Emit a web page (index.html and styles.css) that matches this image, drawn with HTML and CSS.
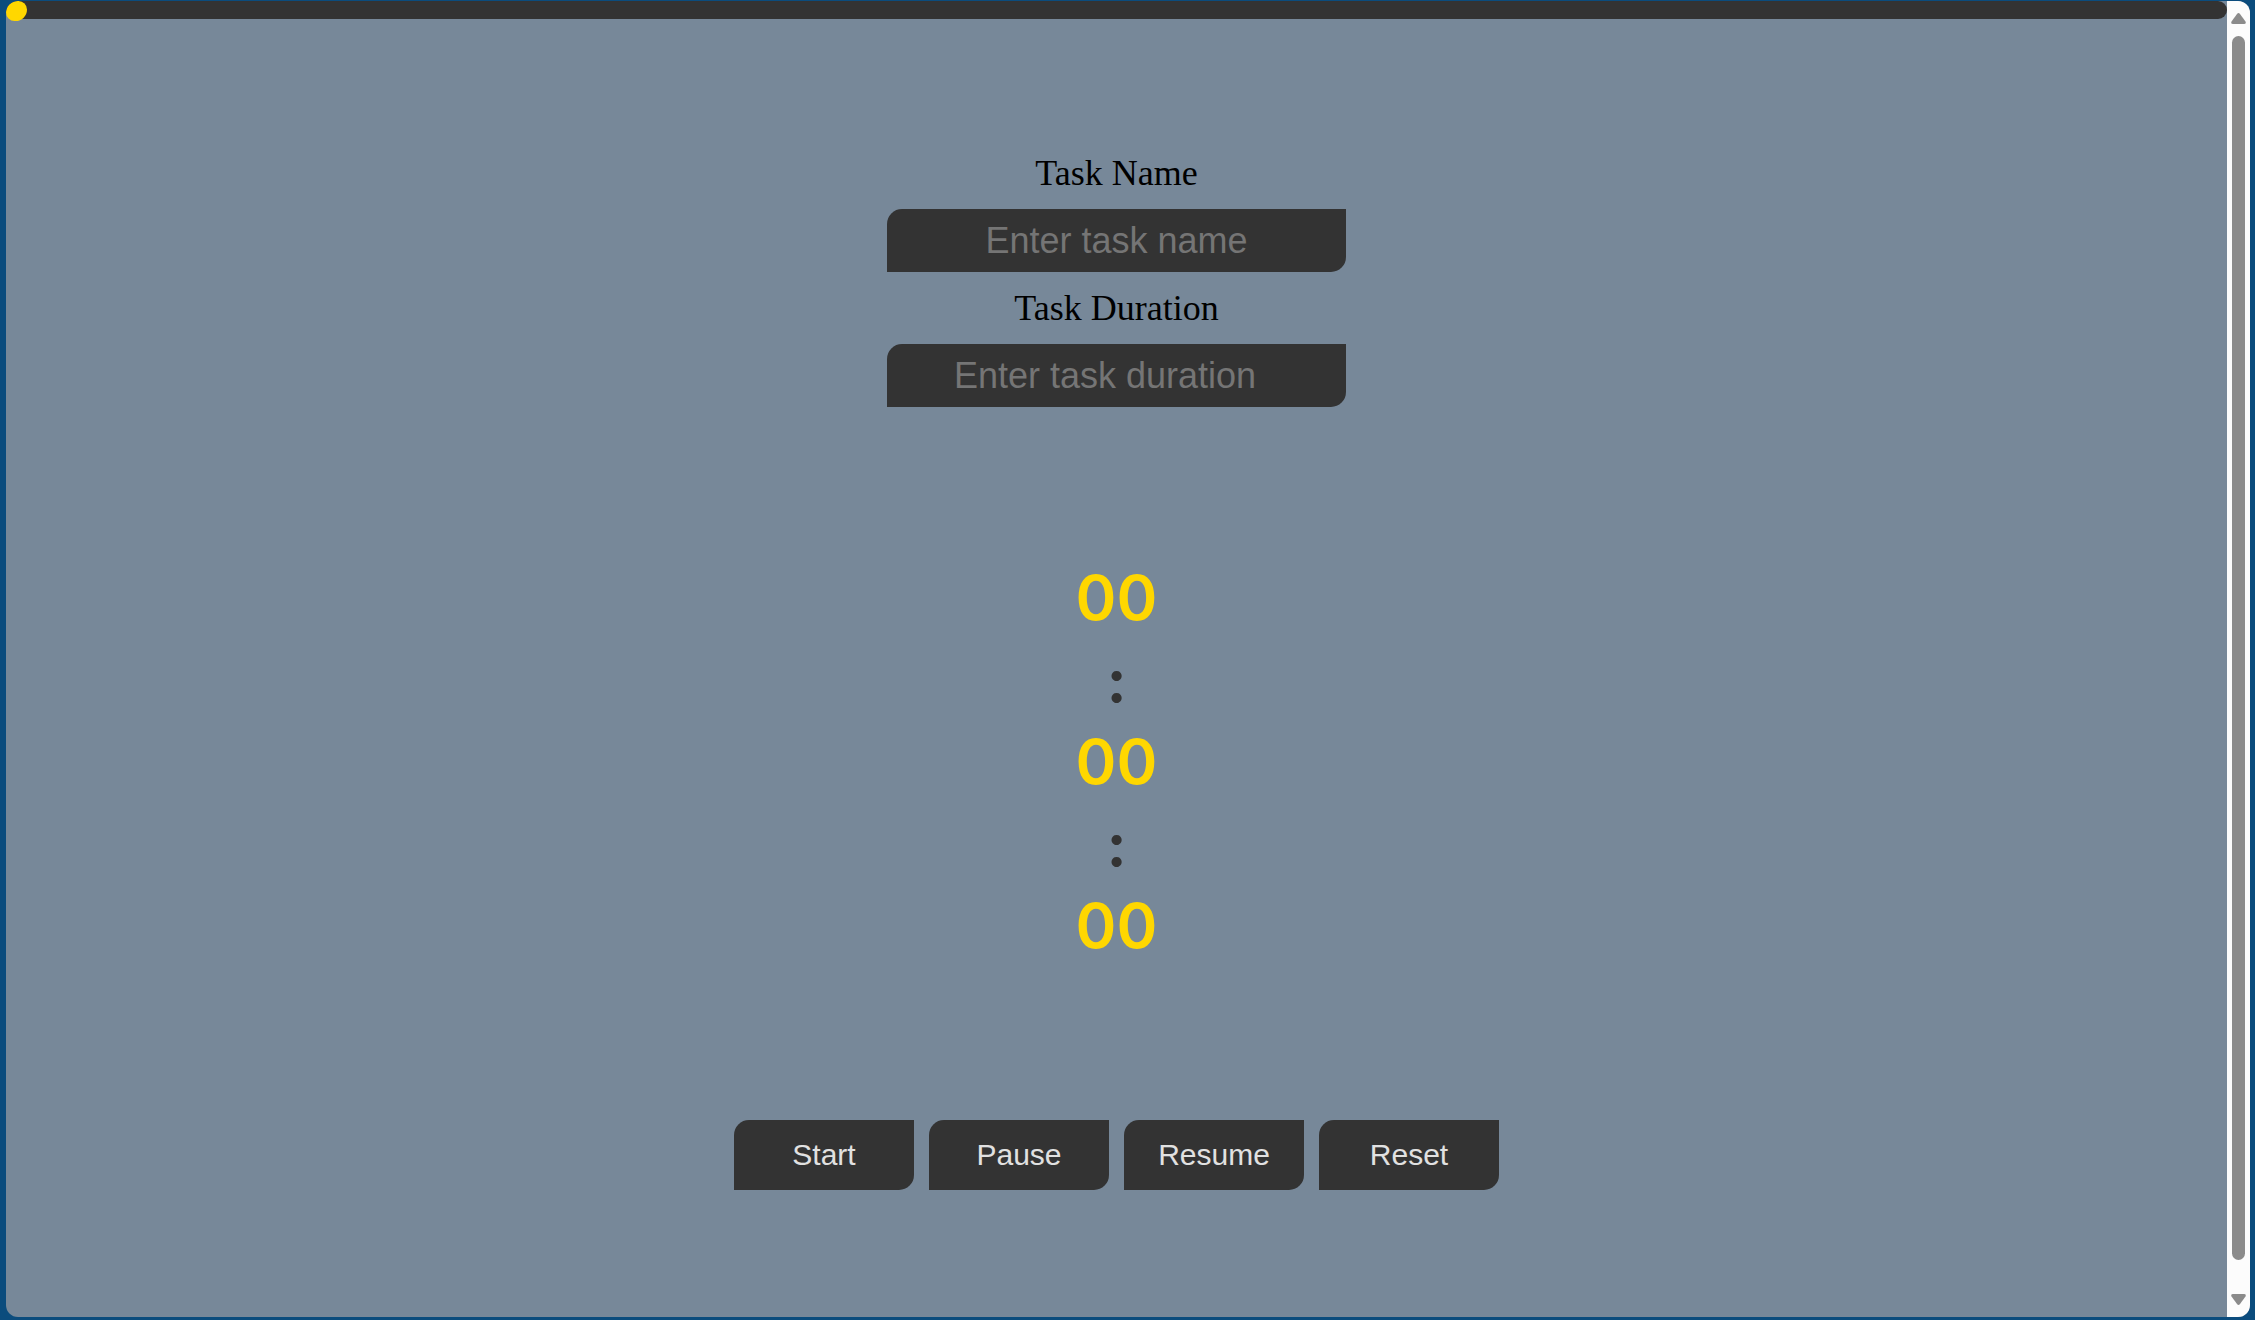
FILE: index.html
```html
<!DOCTYPE html>
<html lang="en">
<head>
<meta charset="utf-8">
<title>Task Timer</title>
<link rel="stylesheet" href="styles.css">
</head>
<body>
<div class="window">
  <main class="page">
    <div class="progress" role="progressbar" aria-label="Task progress" aria-valuenow="0" aria-valuemin="0" aria-valuemax="100">
      <div class="progress-ball"></div>
    </div>
    <div class="content">
      <form class="task-form">
        <label for="task-name">Task Name</label>
        <input id="task-name" type="text" placeholder="Enter task name">
        <label for="task-duration">Task Duration</label>
        <input id="task-duration" class="duration" type="number" placeholder="Enter task duration">
      </form>
      <div class="timer" role="timer">
        <span class="digits">00</span>
        <span class="colon">:</span>
        <span class="digits">00</span>
        <span class="colon">:</span>
        <span class="digits">00</span>
      </div>
      <div class="controls">
        <button type="button">Start</button>
        <button type="button">Pause</button>
        <button type="button">Resume</button>
        <button type="button">Reset</button>
      </div>
    </div>
  </main>
  <div class="scrollbar" aria-hidden="true">
    <svg class="arrow" viewBox="0 0 15 11"><path d="M6 1Q7.500-.8 9 1L14.500 8.500Q15.500 11 13 11H2Q-.5 11 .5 8.500Z"/></svg>
    <div class="thumb"></div>
    <svg class="arrow" viewBox="0 0 15 11"><path d="M6 10Q7.500 11.800 9 10L14.500 2.500Q15.500 0 13 0H2Q-.5 0 .5 2.500Z"/></svg>
  </div>
</div>
</body>
</html>
```
FILE: styles.css
```css
* { box-sizing: border-box; }
body {
  margin: 0;
  height: 100vh;
  padding: 1px 5px 3px 6px;
  background: #0b4c7d;
  font-family: "Liberation Serif", "Times New Roman", serif;
}
.window {
  display: flex;
  height: 100%;
  border-radius: 12px;
  overflow: hidden;
  background: #778899;
}
.page {
  flex: 1;
  display: flex;
  flex-direction: column;
}
.progress {
  height: 18px;
  background: #333;
  border-radius: 9px;
}
.progress-ball {
  width: 21px;
  height: 20px;
  background: #ffd700;
  border-radius: 12px 9px 12px 9px;
}
.content {
  flex: 1;
  display: flex;
  flex-direction: column;
  align-items: center;
  justify-content: space-between;
  padding: 134px 0 127px;
}
.task-form {
  display: flex;
  flex-direction: column;
  align-items: center;
  width: 459px;
}
.task-form label {
  font-size: 36px;
  line-height: 40px;
}
.task-form input {
  width: 100%;
  height: 63px;
  margin: 16px 0;
  padding: 0 12px;
  border: 0;
  border-radius: 15px 0;
  background: #333;
  color: #ffd700;
  font: 36px "Liberation Sans", Arial, sans-serif;
  text-align: center;
}
.task-form .duration { padding-right: 20px; }
.task-form input::placeholder { color: #757575; }
.timer {
  display: flex;
  flex-direction: column;
  align-items: center;
  padding-bottom: 20px;
  line-height: 82px;
}
.digits {
  color: #ffd700;
  font-family: Inter, sans-serif;
  font-size: 62px;
  font-weight: 600;
}
.colon {
  color: #333;
  font-family: Lato, sans-serif;
  font-size: 62px;
  font-weight: 900;
  line-height: 80px;
  padding-bottom: 2px;
}
.controls {
  display: flex;
  gap: 15px;
}
.controls button {
  width: 180px;
  height: 70px;
  border: 0;
  border-radius: 15px 0;
  background: #333;
  color: #e1e1e1;
  font: 30px "Liberation Sans", Arial, sans-serif;
}
.scrollbar {
  display: flex;
  flex-direction: column;
  align-items: center;
  gap: 12px;
  width: 23px;
  padding: 12px 4px;
  background: #fcfcfc;
}
.arrow {
  width: 15px;
  height: 11px;
  fill: #8b8b8b;
}
.thumb {
  flex: 1;
  width: 13px;
  margin-bottom: 22px;
  border-radius: 7px;
  background: #8b8b8b;
}
```
